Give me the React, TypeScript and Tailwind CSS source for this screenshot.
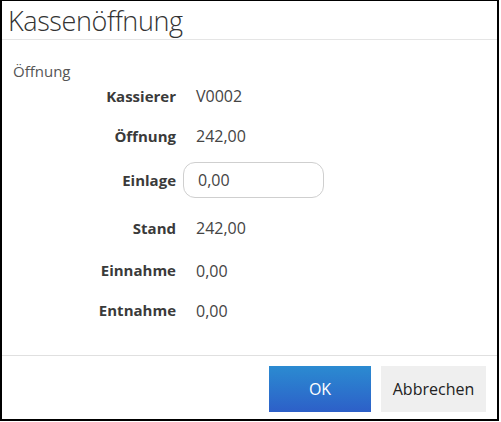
const rows = [
  { label: "Kassierer", value: "V0002", h: "h-[30px]" },
  { label: "Öffnung", value: "242,00", h: "h-[50px]" },
  { label: "Einlage", input: "0,00", h: "h-[38px]" },
  { label: "Stand", value: "242,00", h: "h-[58px]" },
  { label: "Einnahme", value: "0,00", h: "h-[27px]" },
  { label: "Entnahme", value: "0,00", h: "h-[53px]" },
];

export default function App() {
  return (
    <div
      className="w-[499px] h-[421px] bg-white border-black border-t border-l-2 border-r-2 border-b-2 flex flex-col"
      style={{ fontFamily: '"Open Sans", "Noto Sans", sans-serif' }}
    >
      <div className="h-[39px] shrink-0 border-b border-[#e5e5e5] flex items-center pl-[6px]">
        <h1 className="text-[27px] font-light text-[#333] leading-none tracking-[-0.4px]">Kassenöffnung</h1>
      </div>

      <div className="h-[315px] shrink-0 pt-[21px] pl-[11px]">
        <div className="h-[20px] flex items-center text-[15px] text-[#555]">Öffnung</div>
        {rows.map((r) => (
          <div key={r.label} className={`flex items-center ${r.h}`}>
            <div className="w-[163px] text-right text-[15px] font-bold text-[#3a3a3a]">{r.label}</div>
            <div className="ml-[7px]">
              {r.input ? (
                <div className="w-[141px] h-[36px] rounded-[12px] border border-[#cfcfcf] flex items-center pl-[14px] text-[16px] text-[#444]">
                  {r.input}
                </div>
              ) : (
                <div className="pl-[13px] text-[16px] text-[#444]">{r.value}</div>
              )}
            </div>
          </div>
        ))}
      </div>

      <div className="flex-1 border-t border-[#e0e0e0] flex justify-end gap-[10px] pt-[10px] pr-[11px]">
        <button className="w-[102px] h-[46px] bg-gradient-to-b from-[#2b8bd1] to-[#2d5fc8] text-white text-[16px]">
          OK
        </button>
        <button className="w-[105px] h-[46px] bg-[#efefef] text-[#222] text-[16px]">Abbrechen</button>
      </div>
    </div>
  );
}
